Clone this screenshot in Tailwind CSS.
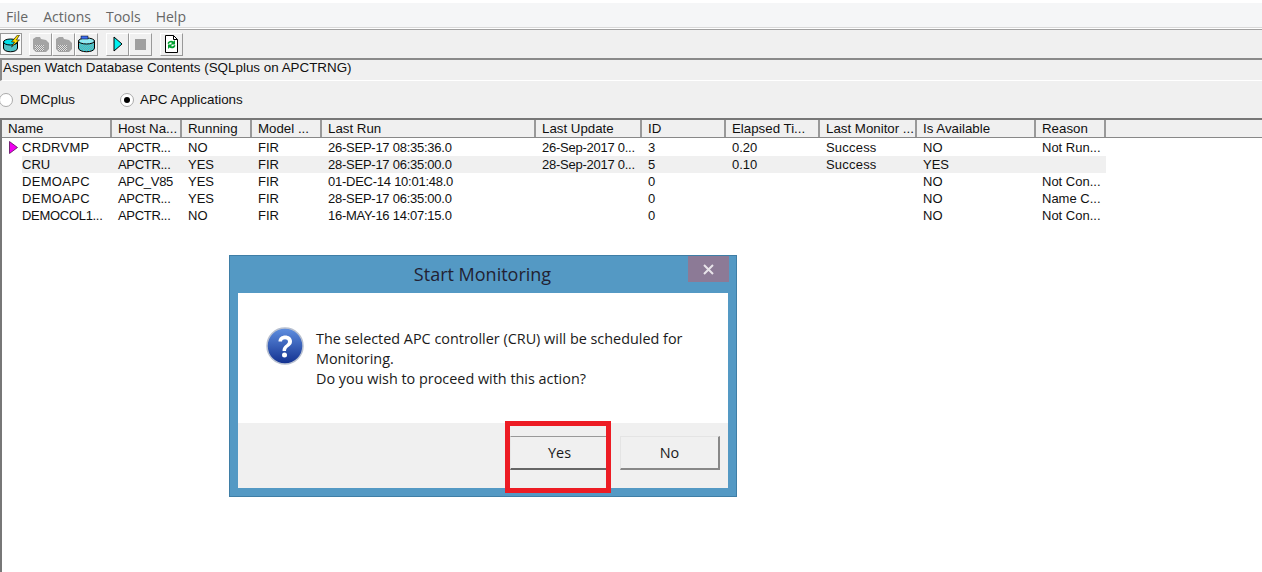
<!DOCTYPE html>
<html lang="en">
<head>
    <meta charset="UTF-8">
    <title>Aspen Watch</title>
    <script src="https://cdn.jsdelivr.net/npm/@tailwindcss/browser@4"></script>
</head>
<body class="relative w-[1262px] h-[572px] overflow-hidden bg-white font-['Liberation_Sans',sans-serif] text-[13px] text-[#111]">

    <!-- shared dither patterns for the toolbar icons -->
    <svg class="absolute" width="0" height="0">
        <defs>
            <pattern id="cyan" width="2" height="2" patternUnits="userSpaceOnUse"><rect width="2" height="2" fill="#00e0ea"/><rect width="1" height="1" fill="#a0a0a0"/><rect x="1" y="1" width="1" height="1" fill="#a0a0a0"/></pattern>
            <pattern id="gray" width="2" height="2" patternUnits="userSpaceOnUse"><rect width="2" height="2" fill="#e0e0e0"/><rect width="1" height="1" fill="#909090"/><rect x="1" y="1" width="1" height="1" fill="#909090"/></pattern>
        </defs>
    </svg>

    <!-- Menu bar -->
    <div class="h-[29px] pt-[3px] bg-white">
        <div class="h-[25px] flex items-center gap-[15px] pl-[6px] pt-[2px] bg-[#f5f6f7] border-b border-[#d8d8d8] font-['Open_Sans',sans-serif] text-[14px] text-[#666]">
            <span>File</span><span>Actions</span><span>Tools</span><span>Help</span>
        </div>
    </div>

    <!-- Toolbar -->
    <div class="h-[29px] flex items-center bg-[#f0f0f0] border-t border-[#a0a0a0]">
        <div class="w-[22px] h-[22px] flex items-center justify-center bg-[#fafafa] border border-[#999]">
            <svg width="19" height="18" viewBox="0 0 18 18"><path d="M1 7v6c0 5 14 5 14 0V7z" fill="url(#cyan)" stroke="#000"/><ellipse cx="8" cy="7" rx="7" ry="3" fill="#00e0ea" stroke="#000"/><path d="M15 0l-6 7h3l-3 5 8-7h-3l3-5z" fill="#ffe000" stroke="#000" stroke-width=".6"/></svg>
        </div>
        <div class="w-[23px] h-[23px] ml-[7px] flex items-center justify-center bg-[#f0f0f0] border border-l-white border-t-white border-r-[#999] border-b-[#999]">
            <svg width="18" height="18" viewBox="0 0 18 18"><path d="M1 4l3-2h4l1 2 5 1 3 3v6l-3 3H4l-3-3z" fill="#a4a4a4"/><path d="M3 10h9v6H3z" fill="url(#gray)"/></svg>
        </div>
        <div class="w-[23px] h-[23px] flex items-center justify-center bg-[#f0f0f0] border border-l-white border-t-white border-r-[#999] border-b-[#999]">
            <svg width="18" height="18" viewBox="0 0 18 18"><path d="M1 4l3-2h4l1 2 5 1 3 3v6l-3 3H4l-3-3z" fill="#a4a4a4"/><path d="M3 10h9v6H3z" fill="url(#gray)"/></svg>
        </div>
        <div class="w-[23px] h-[23px] flex items-center justify-center bg-[#f0f0f0] border border-l-white border-t-white border-r-[#999] border-b-[#999]">
            <svg width="19" height="18" viewBox="0 0 19 18"><path d="M1.500 6v7c0 5 16 5 16 0V6z" fill="url(#cyan)" stroke="#000"/><ellipse cx="9.500" cy="6" rx="8" ry="3" fill="#90e8f0" stroke="#000"/><rect x="4" y="1" width="7" height="3" fill="#3a6cf0" stroke="#000" stroke-width=".5"/></svg>
        </div>
        <div class="w-[23px] h-[23px] ml-[8px] flex items-center justify-center bg-[#f0f0f0] border border-l-white border-t-white border-r-[#999] border-b-[#999]">
            <svg width="12" height="16" viewBox="0 0 12 16"><path d="M2 1l8 7-8 7z" fill="#00f0f0" stroke="#000"/></svg>
        </div>
        <div class="w-[23px] h-[23px] flex items-center justify-center bg-[#f0f0f0] border border-l-white border-t-white border-r-[#999] border-b-[#999]">
            <div class="w-[11px] h-[11px] bg-[#a0a0a0]"></div>
        </div>
        <div class="w-[23px] h-[23px] ml-[8px] flex items-center justify-center bg-[#f0f0f0] border border-l-white border-t-white border-r-[#999] border-b-[#999]">
            <svg width="15" height="18" viewBox="0 0 15 18"><path d="M1.500.5h8l4 4v13h-12z" fill="#fff" stroke="#000"/><path d="M9.500.5v4h4" fill="none" stroke="#000"/><path d="M3.500 8.500C4 5.500 8 5 9.500 6.500L11 5v4.500H6.500L8 8C7 7.200 5.500 7.500 5 9z" fill="#00a030"/><path d="M11.500 10.500C11 13.500 7 14 5.500 12.500L4 14V9.500h4.500L7 11c1 .8 2.500.5 3-1z" fill="#00a030"/></svg>
        </div>
    </div>

    <!-- Title panel -->
    <div class="h-[23px] flex items-start pl-[1px] bg-[#f0f0f0] border-t-2 border-l-2 border-[#8a8a8a] border-b border-b-white">
        <span class="text-[13.4px] leading-[15px]">Aspen Watch Database Contents (SQLplus on APCTRNG)</span>
    </div>

    <!-- Radios -->
    <div class="h-[37px] flex items-center bg-[#f0f0f0] text-[13.4px]">
        <span class="w-[14px] h-[14px] -ml-[1px] rounded-full bg-white border border-[#aaa]"></span>
        <span class="ml-[7px] w-[100px] pt-[1px]">DMCplus</span>
        <span class="w-[14px] h-[14px] rounded-full bg-white border border-[#aaa] flex items-center justify-center"><span class="w-[6px] h-[6px] rounded-full bg-black"></span></span>
        <span class="ml-[6px] pt-[1px]">APC Applications</span>
    </div>

    <!-- Table -->
    <div class="border-l-2 border-[#777] h-[454px]">
        <div class="h-[20px] flex bg-[#f0f0f0] border-t-2 border-[#777] border-b border-b-[#888] leading-[17px] text-[13.3px]">
            <div class="w-[110px] pl-[6px] border-r-2 border-[#999]">Name</div>
            <div class="w-[70px] pl-[6px] border-r-2 border-[#999]">Host Na...</div>
            <div class="w-[70px] pl-[6px] border-r-2 border-[#999]">Running</div>
            <div class="w-[70px] pl-[6px] border-r-2 border-[#999]">Model ...</div>
            <div class="w-[214px] pl-[6px] border-r-2 border-[#999]">Last Run</div>
            <div class="w-[106px] pl-[6px] border-r-2 border-[#999]">Last Update</div>
            <div class="w-[84px] pl-[6px] border-r-2 border-[#999]">ID</div>
            <div class="w-[94px] pl-[6px] border-r-2 border-[#999]">Elapsed Ti...</div>
            <div class="w-[97px] pl-[6px] border-r-2 border-[#999]">Last Monitor ...</div>
            <div class="w-[119px] pl-[6px] border-r-2 border-[#999]">Is Available</div>
            <div class="w-[70px] pl-[6px] border-r-2 border-[#999]">Reason</div>
        </div>

        <div class="pt-[1px] leading-[17px]">
            <div class="relative h-[17px] flex">
                <svg class="absolute left-[7px] top-[2px]" width="9" height="13" viewBox="0 0 9 13"><path d="M.5.500l8 6-8 6z" fill="#f000f0" stroke="#400040" stroke-width=".7"/></svg>
                <div class="w-[110px] pl-[20px] tracking-[0.3px]">CRDRVMP</div>
                <div class="w-[70px] pl-[6px] tracking-[-0.3px]">APCTR...</div>
                <div class="w-[70px] pl-[6px]">NO</div>
                <div class="w-[70px] pl-[6px]">FIR</div>
                <div class="w-[214px] pl-[6px] tracking-[-0.25px]">26-SEP-17 08:35:36.0</div>
                <div class="w-[106px] pl-[6px] tracking-[-0.25px]">26-Sep-2017 0...</div>
                <div class="w-[84px] pl-[6px]">3</div>
                <div class="w-[94px] pl-[6px]">0.20</div>
                <div class="w-[97px] pl-[6px] tracking-[0.2px]">Success</div>
                <div class="w-[119px] pl-[6px]">NO</div>
                <div class="w-[70px] pl-[6px]">Not Run...</div>
            </div>
            <div class="h-[17px] flex">
                <div class="w-[20px]"></div>
                <div class="w-[1084px] flex bg-[#f0f0f0]">
                    <div class="w-[90px]">CRU</div>
                    <div class="w-[70px] pl-[6px] tracking-[-0.3px]">APCTR...</div>
                    <div class="w-[70px] pl-[6px]">YES</div>
                    <div class="w-[70px] pl-[6px]">FIR</div>
                    <div class="w-[214px] pl-[6px] tracking-[-0.25px]">28-SEP-17 06:35:00.0</div>
                    <div class="w-[106px] pl-[6px] tracking-[-0.25px]">28-Sep-2017 0...</div>
                    <div class="w-[84px] pl-[6px]">5</div>
                    <div class="w-[94px] pl-[6px]">0.10</div>
                    <div class="w-[97px] pl-[6px] tracking-[0.2px]">Success</div>
                    <div class="w-[119px] pl-[6px]">YES</div>
                </div>
            </div>
            <div class="h-[17px] flex">
                <div class="w-[110px] pl-[20px] tracking-[0.3px]">DEMOAPC</div>
                <div class="w-[70px] pl-[6px] tracking-[-0.3px]">APC_V85</div>
                <div class="w-[70px] pl-[6px]">YES</div>
                <div class="w-[70px] pl-[6px]">FIR</div>
                <div class="w-[214px] pl-[6px] tracking-[-0.25px]">01-DEC-14 10:01:48.0</div>
                <div class="w-[106px]"></div>
                <div class="w-[84px] pl-[6px]">0</div>
                <div class="w-[94px]"></div>
                <div class="w-[97px]"></div>
                <div class="w-[119px] pl-[6px]">NO</div>
                <div class="w-[70px] pl-[6px]">Not Con...</div>
            </div>
            <div class="h-[17px] flex">
                <div class="w-[110px] pl-[20px] tracking-[0.3px]">DEMOAPC</div>
                <div class="w-[70px] pl-[6px] tracking-[-0.3px]">APCTR...</div>
                <div class="w-[70px] pl-[6px]">YES</div>
                <div class="w-[70px] pl-[6px]">FIR</div>
                <div class="w-[214px] pl-[6px] tracking-[-0.25px]">28-SEP-17 06:35:00.0</div>
                <div class="w-[106px]"></div>
                <div class="w-[84px] pl-[6px]">0</div>
                <div class="w-[94px]"></div>
                <div class="w-[97px]"></div>
                <div class="w-[119px] pl-[6px]">NO</div>
                <div class="w-[70px] pl-[6px]">Name C...</div>
            </div>
            <div class="h-[17px] flex">
                <div class="w-[110px] pl-[20px] tracking-[-0.3px]">DEMOCOL1...</div>
                <div class="w-[70px] pl-[6px] tracking-[-0.3px]">APCTR...</div>
                <div class="w-[70px] pl-[6px]">NO</div>
                <div class="w-[70px] pl-[6px]">FIR</div>
                <div class="w-[214px] pl-[6px] tracking-[-0.25px]">16-MAY-16 14:07:15.0</div>
                <div class="w-[106px]"></div>
                <div class="w-[84px] pl-[6px]">0</div>
                <div class="w-[94px]"></div>
                <div class="w-[97px]"></div>
                <div class="w-[119px] pl-[6px]">NO</div>
                <div class="w-[70px] pl-[6px]">Not Con...</div>
            </div>
        </div>
    </div>

    <!-- Start Monitoring dialog -->
    <div class="absolute left-[229px] top-[255px] w-[508px] h-[242px] bg-[#5499c4] border border-[#3f7ea6] font-['Open_Sans',sans-serif] text-[14.4px] text-[#1a1a1a]">
        <div class="relative h-[37px] flex items-center justify-center text-[18px] text-[#223] pb-[1px] pr-[1px]">
            Start Monitoring
            <div class="absolute right-[7px] top-0 w-[41px] h-[26px] flex items-center justify-center bg-[#8c7a96]">
                <svg width="11" height="11" viewBox="0 0 11 11"><path d="M1 1l9 9M10 1l-9 9" stroke="#e8e4ea" stroke-width="2"/></svg>
            </div>
        </div>
        <div class="mx-[8px] h-[195px] bg-white flex flex-col">
            <div class="h-[130px] flex pl-[28px] pt-[34px]">
                <svg class="shrink-0" width="38" height="38" viewBox="0 0 38 38">
                    <defs><linearGradient id="q" x1="0" y1="0" x2="0" y2="1"><stop offset="0" stop-color="#5f8fe0"/><stop offset="1" stop-color="#12308f"/></linearGradient></defs>
                    <circle cx="19" cy="19" r="18" fill="url(#q)" stroke="#b8c0d0" stroke-width="1.500"/>
                    <path d="M12.500 14.500c0-8 13.500-8 13.500 0 0 5-6 5-6 9.500h-3.500c0-6 5.500-6 5.500-9.500 0-3-6-3-6 0z" fill="#fff"/>
                    <circle cx="18.500" cy="28" r="2.500" fill="#fff"/>
                </svg>
                <p class="ml-[12px] w-[380px] leading-[20px] pt-[2px]">The selected APC controller (CRU) will be scheduled for Monitoring.<br>Do you wish to proceed with this action?</p>
            </div>
            <div class="h-[65px] bg-[#f0f0f0] flex justify-end items-start pt-[13px] pr-[8px] gap-[12px]">
                <button class="w-[98px] h-[34px] bg-[#f0f0f0] border border-[#e8e8e8] border-r-2 border-b-2 border-r-[#777] border-b-[#666] border-t-[#999] pl-[2px] pt-[1px]">Yes</button>
                <button class="w-[100px] h-[34px] bg-[#f0f0f0] border border-[#e4e4e4] border-r-2 border-b-2 border-r-[#888] border-b-[#888] pt-[1px]">No</button>
            </div>
        </div>
        <!-- red annotation box -->
        <div class="absolute left-[275px] top-[165px] w-[106px] h-[72px] border-[5px] border-[#ed1c24]"></div>
    </div>

</body>
</html>
